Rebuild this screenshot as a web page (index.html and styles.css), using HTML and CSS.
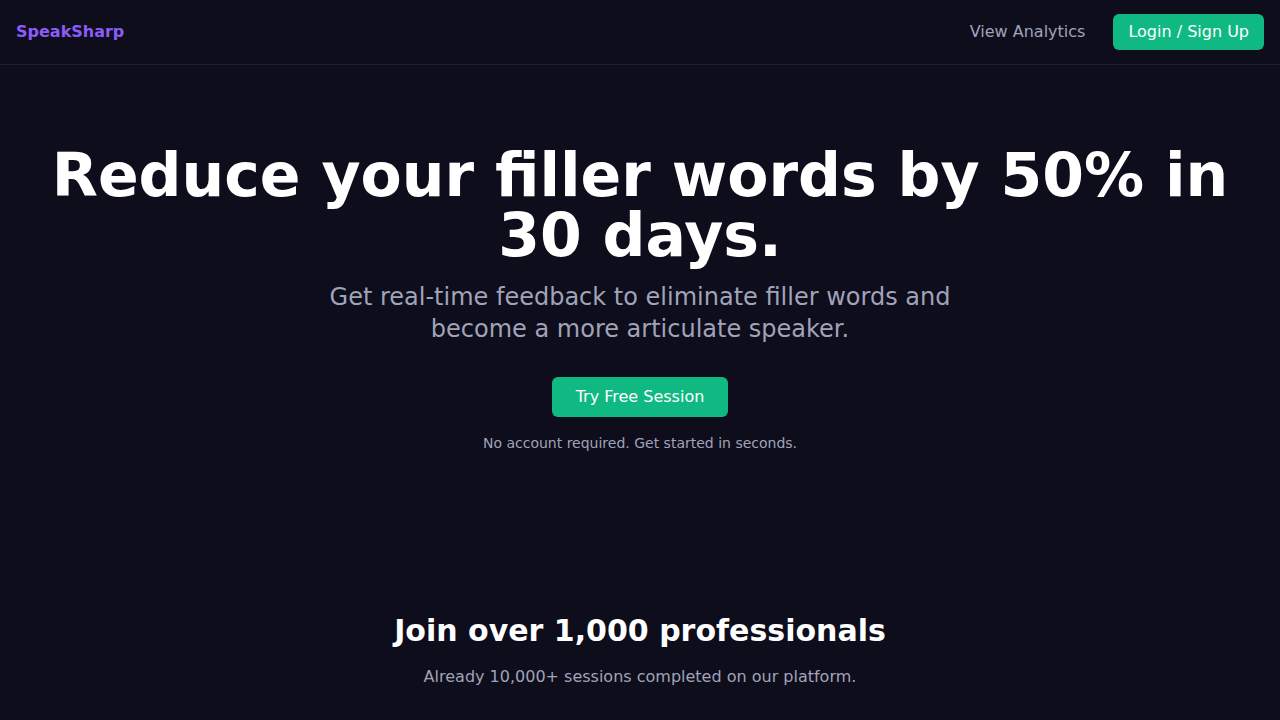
FILE: index.html
```html
<!DOCTYPE html>
<html lang="en">
<head>
<meta charset="utf-8">
<title>SpeakSharp</title>
<link rel="stylesheet" href="styles.css">
</head>
<body>
<header class="nav">
  <a class="logo" href="#">SpeakSharp</a>
  <nav class="nav-links">
    <a class="nav-link" href="#">View Analytics</a>
    <a class="btn btn-nav" href="#">Login / Sign Up</a>
  </nav>
</header>
<main>
  <section class="hero">
    <h1 class="hero-title">Reduce your filler words by 50% in 30 days.</h1>
    <p class="hero-sub">Get real-time feedback to eliminate filler words and become a more articulate speaker.</p>
    <a class="btn btn-cta" href="#">Try Free Session</a>
    <p class="hero-note">No account required. Get started in seconds.</p>
  </section>
  <section class="social">
    <h2 class="social-title">Join over 1,000 professionals</h2>
    <p class="social-sub">Already 10,000+ sessions completed on our platform.</p>
  </section>
</main>
</body>
</html>
```
FILE: styles.css
```css
* { box-sizing: border-box; }
html, body {
  margin: 0;
  padding: 0;
  background: #0d0d1c;
  color: #ffffff;
  font-family: "DejaVu Sans", sans-serif;
}
a { text-decoration: none; }
.nav {
  height: 65px;
  display: flex;
  align-items: center;
  justify-content: space-between;
  padding: 0 16px 1px;
  border-bottom: 1px solid #1f1f33;
}
.logo {
  color: #8b5cf6;
  font-weight: bold;
  font-size: 16px;
  line-height: 24px;
}
.nav-links {
  display: flex;
  align-items: center;
  gap: 28px;
}
.nav-link {
  color: #a1a3b8;
  font-size: 16px;
  line-height: 24px;
}
.btn {
  display: inline-block;
  background: #10b981;
  color: #ffffff;
  font-size: 16px;
  line-height: 24px;
  border-radius: 6px;
}
.btn-nav {
  padding: 6px 15px;
}
.btn-cta {
  padding: 8px 24px;
}
.hero {
  padding: 80px 16px;
  text-align: center;
  display: flex;
  flex-direction: column;
  align-items: center;
}
.hero-title {
  margin: 0 0 16px;
  font-size: 60px;
  line-height: 60px;
  font-weight: bold;
}
.hero-sub {
  margin: 0 0 32px;
  max-width: 672px;
  font-size: 24px;
  line-height: 32px;
  color: #a1a3b8;
}
.hero-note {
  margin: 16px 0 0;
  font-size: 14px;
  line-height: 20px;
  color: #a1a3b8;
}
.social {
  padding: 80px 16px;
  text-align: center;
}
.social-title {
  margin: 0 0 16px;
  font-size: 30px;
  line-height: 36px;
  font-weight: bold;
}
.social-sub {
  margin: 0;
  font-size: 16px;
  line-height: 24px;
  color: #a1a3b8;
}
```
